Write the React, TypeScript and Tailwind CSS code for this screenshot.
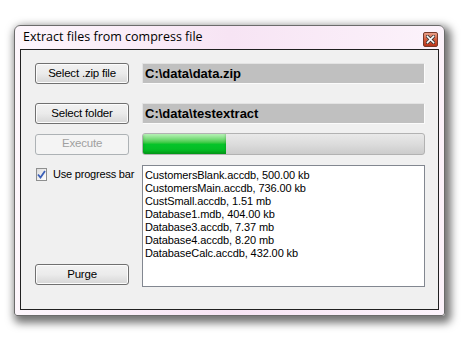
const files = [
  'CustomersBlank.accdb, 500.00 kb',
  'CustomersMain.accdb, 736.00 kb',
  'CustSmall.accdb, 1.51 mb',
  'Database1.mdb, 404.00 kb',
  'Database3.accdb, 7.37 mb',
  'Database4.accdb, 8.20 mb',
  'DatabaseCalc.accdb, 432.00 kb',
];

const WinButton = ({ label, disabled = false }: { label: string; disabled?: boolean }) => (
  <div
    className={
      disabled
        ? 'w-[94px] h-[21px] flex items-center justify-center rounded-[3px] border border-[#adb2b5] bg-[#f4f4f4] text-[#a0a0a0] text-[11.5px] tracking-[-0.2px]'
        : 'w-[94px] h-[21px] flex items-center justify-center rounded-[3px] border border-[#707070] bg-gradient-to-b from-[#f2f2f2] via-[#ebebeb] to-[#d6d6d6] text-black text-[11.5px] tracking-[-0.2px] shadow-[inset_0_0_0_1px_#fcfcfc]'
    }
  >
    {label}
  </div>
);

const PathBox = ({ value }: { value: string }) => (
  <div className="w-[283px] h-[21px] flex items-center px-[2px] border border-t-[#e3e3e3] border-l-[#e3e3e3] border-b-[#fbfbfb] border-r-[#fbfbfb] bg-[#c0c0c0] text-[13px] font-bold text-black">
    {value}
  </div>
);

export default function App() {
  return (
    <div
      className="w-[466px] h-[338px] bg-white overflow-hidden"
      style={{ fontFamily: '"Liberation Sans", Arial, sans-serif' }}
    >
      <div className="ml-[14px] mt-[25px] w-[431px] h-[291px] flex flex-col rounded-t-[6px] rounded-b-[3px] border border-[#6b6b6b] bg-gradient-to-r from-[#fdf6fc] via-[#f7e4f4] to-[#fcf3fb] shadow-[3px_4px_9px_3px_rgba(0,0,0,0.55)]">
        <div className="h-[22px] flex items-center justify-between pl-[8px] pr-[6px]">
          <span className="text-[12.5px] text-black" style={{ fontFamily: '"Open Sans", "Noto Sans", sans-serif' }}>
            Extract files from compress file
          </span>
          <div className="w-[15px] h-[15px] mt-[5px] rounded-[2px] border border-[#7a3a2a] bg-gradient-to-b from-[#e8a08a] via-[#d25a3a] to-[#b8341a] flex items-center justify-center">
            <svg width="9" height="9" viewBox="0 0 9 9">
              <path d="M1.5 1.5 L7.5 7.5 M7.5 1.5 L1.5 7.5" stroke="#3a3a3a" strokeWidth="3.2" strokeLinecap="square" />
              <path d="M1.5 1.5 L7.5 7.5 M7.5 1.5 L1.5 7.5" stroke="#ffffff" strokeWidth="1.6" strokeLinecap="square" />
            </svg>
          </div>
        </div>
        <div className="mx-[5px] mt-[1px] w-[419px] h-[261px] border border-[#202020] bg-[#f0f0f0] pt-[13px] pl-[14px] text-black">
          <div className="flex items-center gap-[13px]">
            <WinButton label="Select .zip file" />
            <PathBox value="C:\data\data.zip" />
          </div>
          <div className="flex items-center gap-[13px] mt-[19px]">
            <WinButton label="Select folder" />
            <PathBox value="C:\data\testextract" />
          </div>
          <div className="flex items-center gap-[13px] mt-[9px]">
            <WinButton label="Execute" disabled />
            <div className="relative w-[283px] h-[22px] rounded-[3px] border border-[#b2b2b2] bg-gradient-to-b from-[#e9e9e9] via-[#dcdcdc] to-[#cccccc] overflow-hidden">
              <div className="w-[83px] h-full bg-gradient-to-b from-[#b8f2b8] via-[#06c42a] to-[#04b822] shadow-[inset_0_-2px_3px_rgba(0,80,0,0.35)]" />
            </div>
          </div>
          <div className="flex mt-[10px] gap-[13px]">
            <div className="w-[94px] h-[122px] flex flex-col justify-between">
              <div className="flex items-center gap-[6px] mt-[3px] h-[13px]">
                <div className="ml-[1px] w-[13px] h-[13px] border border-[#8e8f8f] bg-gradient-to-br from-[#dcdcdc] to-[#ffffff] flex items-center justify-center">
                  <svg width="9" height="9" viewBox="0 0 9 9">
                    <path d="M1 4.5 L3.5 7.5 L8 1" fill="none" stroke="#3a5fb8" strokeWidth="1.8" />
                  </svg>
                </div>
                <span className="text-[11px] tracking-[-0.2px] whitespace-nowrap">Use progress bar</span>
              </div>
              <div className="mb-[2px]">
                <WinButton label="Purge" />
              </div>
            </div>
            <div className="w-[283px] h-[122px] border border-[#828790] bg-white pl-[2px] pt-[3px]">
              {files.map((f) => (
                <div key={f} className="text-[11px] leading-[13px] tracking-[-0.1px]">
                  {f}
                </div>
              ))}
            </div>
          </div>
        </div>
      </div>
    </div>
  );
}
